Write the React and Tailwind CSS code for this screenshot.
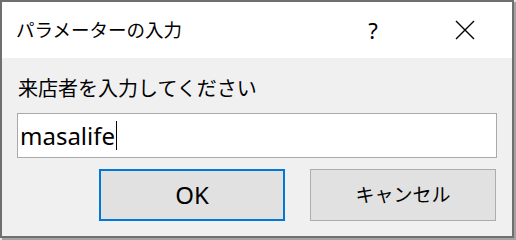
import React from "react";

const font = {
  fontFamily: '"Noto Sans", "Noto Sans CJK JP", sans-serif',
};

const CloseIcon = () => (
  <svg width="20" height="20" viewBox="0 0 20 20" fill="none">
    <path d="M1 1L19 19M19 1L1 19" stroke="#000" strokeWidth="1.4" />
  </svg>
);

export default function App() {
  return (
    <div
      className="w-[516px] h-[240px] bg-[#e6e6e6] overflow-hidden"
      style={font}
    >
      {/* dialog window */}
      <div className="w-[514px] h-[238px] border-2 border-[#6f6f6f] flex flex-col shadow-[2px_2px_0_#a3a3a3]">
        {/* title bar */}
        <div className="h-[56px] bg-white flex items-center pl-[14px] pr-[12px]">
          <span className="text-[18.5px] text-black leading-none">
            パラメーターの入力
          </span>
          <div className="ml-auto flex items-center gap-[22px]">
            <div className="w-[70px] flex justify-center text-[22px] text-black leading-none">
              ?
            </div>
            <div className="w-[70px] flex justify-center">
              <CloseIcon />
            </div>
          </div>
        </div>

        {/* body */}
        <div className="flex-1 bg-[#f0f0f0] px-[15px] pt-[16px]">
          <div className="h-[30px] leading-[30px] text-[20px] text-black pl-[1px]">
            来店者を入力してください
          </div>
          <div className="mt-[9px] h-[45px] border border-[#a9a9a9] bg-white flex items-center pl-[2px]">
            <span className="text-[24px] text-black leading-none">masalife</span>
            <span className="w-px h-[29px] bg-black ml-[1px]" />
          </div>
          <div className="mt-[11px] flex justify-end gap-[25px] pr-px">
            <button className="w-[186px] h-[52px] border-2 border-[#0078d7] bg-[#e1e1e1] text-[24px] text-black">
              OK
            </button>
            <button className="w-[186px] h-[52px] border border-[#adadad] bg-[#e1e1e1] text-[19px] text-black">
              キャンセル
            </button>
          </div>
        </div>
      </div>
    </div>
  );
}
